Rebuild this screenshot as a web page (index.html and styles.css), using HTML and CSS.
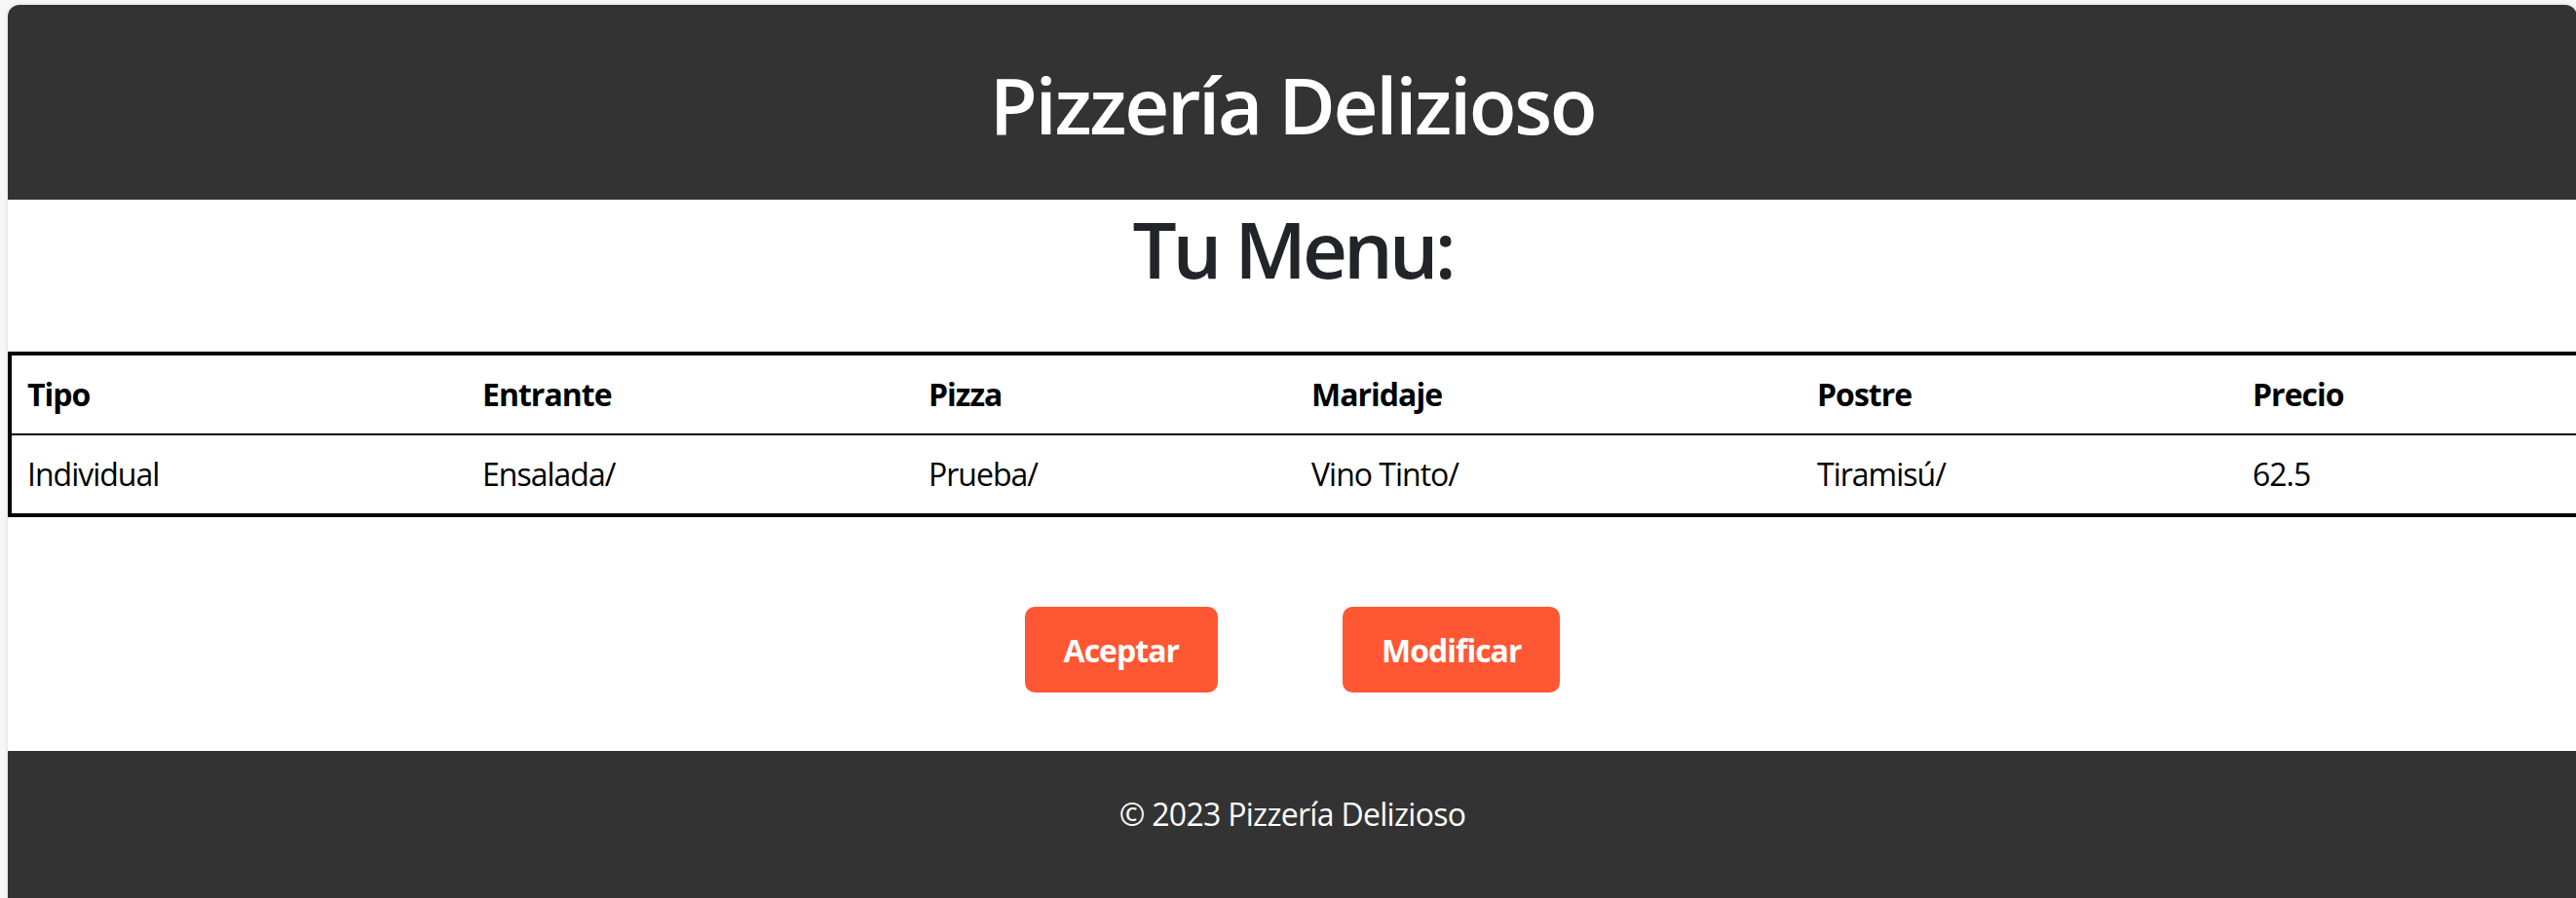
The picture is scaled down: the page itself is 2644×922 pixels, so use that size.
FILE: index.html
```html
<!DOCTYPE html>
<html lang="es">
<head>
<meta charset="utf-8">
<title>Pizzería Delizioso</title>
<link rel="stylesheet" href="styles.css">
</head>
<body>
<div class="page">
  <header class="site-header">
    <h1 class="site-title">Pizzería Delizioso</h1>
  </header>
  <main class="content">
    <h2 class="menu-title">Tu Menu:</h2>
    <table class="menu-table">
      <colgroup>
        <col class="col-tipo">
        <col class="col-entrante">
        <col class="col-pizza">
        <col class="col-maridaje">
        <col class="col-postre">
        <col class="col-precio">
      </colgroup>
      <thead>
        <tr>
          <th>Tipo</th>
          <th>Entrante</th>
          <th>Pizza</th>
          <th>Maridaje</th>
          <th>Postre</th>
          <th>Precio</th>
        </tr>
      </thead>
      <tbody>
        <tr>
          <td>Individual</td>
          <td>Ensalada/</td>
          <td>Prueba/</td>
          <td>Vino Tinto/</td>
          <td>Tiramisú/</td>
          <td>62.5</td>
        </tr>
      </tbody>
    </table>
    <div class="actions">
      <button class="btn" type="button">Aceptar</button>
      <button class="btn" type="button">Modificar</button>
    </div>
  </main>
  <footer class="site-footer">
    <p class="copyright">© 2023 Pizzería Delizioso</p>
  </footer>
</div>
</body>
</html>
```

FILE: styles.css
```css
html, body {
  overflow: hidden;
}

body {
  margin: 0;
  padding: 5px 0 0 8px;
  background: #f6f6f6;
  font-family: "Open Sans", "Noto Sans", sans-serif;
  font-size: 32px;
  line-height: 48px;
  color: #000;
}

.page {
  width: 2637px;
  background: #fff;
  border-radius: 12px 12px 0 0;
  box-shadow: 0 0 4px rgba(0, 0, 0, 0.12);
}

.site-header {
  background: #333;
  color: #fff;
  text-align: center;
  padding: 54px 0 50px;
  border-radius: 12px 12px 0 0;
}

.site-title {
  margin: 0;
  font-size: 80px;
  line-height: 96px;
  font-weight: 600;
  letter-spacing: -2.4px;
}

.menu-title {
  margin: 2px 0 58px;
  text-align: center;
  font-size: 80px;
  line-height: 96px;
  font-weight: 600;
  color: #212529;
  letter-spacing: -4px;
}

.menu-table {
  width: calc(100% + 8px);
  table-layout: fixed;
  border-collapse: separate;
  border-spacing: 0;
  border: 4px solid #000;
  letter-spacing: -1px;
}

.col-tipo { width: 467px; }
.col-entrante { width: 458px; }
.col-pizza { width: 393px; }
.col-maridaje { width: 519px; }
.col-postre { width: 447px; }

.menu-table th,
.menu-table td {
  padding: 16px 16px;
  text-align: left;
  vertical-align: top;
}

.menu-table th {
  font-weight: 700;
  border-bottom: 2px solid #000;
}

.menu-table td {
  font-weight: 400;
}

.actions {
  display: flex;
  justify-content: center;
  gap: 128px;
  padding: 92px 0 60px;
}

.btn {
  font-family: inherit;
  font-size: 32px;
  line-height: 48px;
  font-weight: 700;
  letter-spacing: -1px;
  color: #fff;
  background: #ff5733;
  border: none;
  border-radius: 10px;
  padding: 21px 40px 19px;
}

.site-footer {
  background: #333;
  color: #fff;
  text-align: center;
  padding: 41px 0 90px;
}

.copyright {
  margin: 0;
  letter-spacing: -0.7px;
}
```
